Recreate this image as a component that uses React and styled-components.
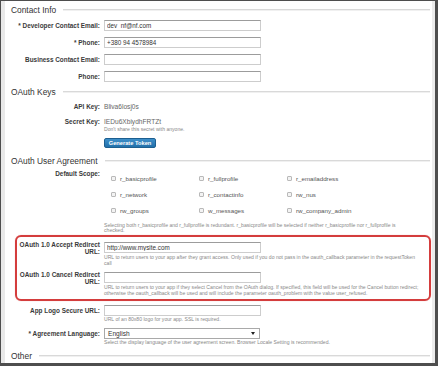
import styled, { createGlobalStyle } from "styled-components";

const GlobalStyle = createGlobalStyle`
  html, body { margin: 0; padding: 0; background: #fff; }
  body { font-family: "Liberation Sans", Arial, sans-serif; }
`;

const Frame = styled.div`
  box-sizing: border-box;
  width: 438px;
  height: 366px;
  border-style: solid;
  border-color: #4e4e4e;
  border-width: 1px 3px 3px 1px;
  background: #fff;
  overflow: hidden;
`;

const Page = styled.div`
  box-sizing: border-box;
  height: 100%;
  border-left: 4px solid #e9e9e9;
  border-right: 3px solid #ececec;
  padding-top: 4px;
  display: flex;
  flex-direction: column;
`;

const Heading = styled.div`
  display: flex;
  align-items: center;
  gap: 7px;
  height: 10px;
  margin-top: ${(p) => p.$top || 0}px;
  padding: 0 2px 0 6px;
  font-size: 8.4px;
  color: #333;

  &::after {
    content: "";
    flex: 1;
    height: 0;
    border-top: 1px solid #d9d9d9;
    border-bottom: 1px solid #f0f0f0;
  }
`;

const Row = styled.div`
  display: grid;
  grid-template-columns: ${(p) => p.$label || 95}px 1fr;
  column-gap: 4px;
  align-items: start;
  margin-top: ${(p) => p.$top || 0}px;
`;

const Label = styled.div`
  text-align: right;
  font-size: 6.4px;
  font-weight: bold;
  color: #3a3a3a;
  line-height: ${(p) => p.$lh || 11}px;
`;

const Cell = styled.div`
  display: flex;
  flex-direction: column;
  align-items: flex-start;
`;

const TextInput = styled.input`
  box-sizing: border-box;
  width: 157px;
  height: 11px;
  margin: ${(p) => p.$top || 0}px 0 0;
  padding: 0 2px;
  border: 1px solid #cdcdcd;
  border-top-color: #9c9c9c;
  border-radius: 0;
  background: #fff;
  font-family: inherit;
  font-size: 6.3px;
  line-height: 9px;
  color: #333;
  outline: none;
`;

const Value = styled.div`
  font-size: 6.6px;
  color: #666;
  line-height: 11px;
`;

const Hint = styled.div`
  margin-top: ${(p) => p.$top || 0}px;
  font-size: 5.1px;
  line-height: ${(p) => p.$lh || 5.7}px;
  color: #888;
  white-space: nowrap;
`;

const Button = styled.button`
  box-sizing: border-box;
  margin-top: 5px;
  width: 52px;
  height: 10px;
  padding: 0;
  border: 1px solid #1d5f90;
  border-radius: 2px;
  background: linear-gradient(#3d8fc9, #2270aa);
  color: #fff;
  font-family: inherit;
  font-size: 5.7px;
  font-weight: bold;
`;

const ScopeGrid = styled.div`
  display: grid;
  grid-template-columns: repeat(3, 88px);
  grid-auto-rows: 8px;
  row-gap: 8px;
  margin-top: 5px;
  padding-left: 7px;
`;

const Scope = styled.label`
  display: flex;
  align-items: center;
  gap: 4px;
  font-size: 6.2px;
  color: #555;
  white-space: nowrap;
`;

const Box = styled.span`
  box-sizing: border-box;
  flex: none;
  width: 5px;
  height: 5px;
  border: 1px solid #b9b9b9;
  border-radius: 1px;
  background: #f3f3f3;
`;

const Highlight = styled.div`
  margin: 1px 1px 0 10px;
  padding: 4px 0 2px;
  border: 2px solid #d43d3d;
  border-radius: 6px;
  box-shadow: 0 0 1px rgba(200, 40, 40, 0.4);
`;

const Select = styled.div`
  box-sizing: border-box;
  display: flex;
  align-items: center;
  justify-content: space-between;
  width: 156px;
  height: 11px;
  padding: 0 4px 0 3px;
  border: 1px solid #a9a9a9;
  font-size: 6.6px;
  color: #333;
  background: #fff;

  &::after {
    content: "";
    border-left: 2px solid transparent;
    border-right: 2px solid transparent;
    border-top: 3px solid #222;
  }
`;

const scopes = [
  "r_basicprofile",
  "r_fullprofile",
  "r_emailaddress",
  "r_network",
  "r_contactinfo",
  "rw_nus",
  "rw_groups",
  "w_messages",
  "rw_company_admin",
];

export default function App() {
  return (
    <>
      <GlobalStyle />
      <Frame>
        <Page>
          <Heading>Contact Info</Heading>

          <Row $top={5}>
            <Label>* Developer Contact Email:</Label>
            <TextInput readOnly defaultValue="dev_nf@nf.com" />
          </Row>
          <Row $top={6}>
            <Label>* Phone:</Label>
            <TextInput readOnly defaultValue="+380 94 4578984" />
          </Row>
          <Row $top={6}>
            <Label>Business Contact Email:</Label>
            <TextInput readOnly />
          </Row>
          <Row $top={6}>
            <Label>Phone:</Label>
            <TextInput readOnly />
          </Row>

          <Heading $top={5}>OAuth Keys</Heading>
          <Row $top={4}>
            <Label>API Key:</Label>
            <Value>Bliva6losj0s</Value>
          </Row>
          <Row $top={4}>
            <Label>Secret Key:</Label>
            <Cell>
              <Value>IEDu6XbiydhFRTZt</Value>
              <Hint>Don't share this secret with anyone.</Hint>
              <Button>Generate Token</Button>
            </Cell>
          </Row>

          <Heading $top={8}>OAuth User Agreement</Heading>
          <Row $top={4}>
            <Label $lh={8}>Default Scope:</Label>
            <Cell>
              <ScopeGrid>
                {scopes.map((s) => (
                  <Scope key={s}>
                    <Box />
                    {s}
                  </Scope>
                ))}
              </ScopeGrid>
              <Hint $top={8}>
                Selecting both r_basicprofile and r_fullprofile is redundant. r_basicprofile will be selected if neither r_basicprofile nor r_fullprofile is
                <br />
                checked.
              </Hint>
            </Cell>
          </Row>

          <Highlight>
            <Row $label={83}>
              <Label $lh={7}>
                OAuth 1.0 Accept Redirect
                <br />
                URL:
              </Label>
              <Cell>
                <TextInput readOnly defaultValue="http://www.mysite.com" $top={1} />
                <Hint $top={1} $lh={6}>
                  URL to return users to your app after they grant access. Only used if you do not pass in the oauth_callback parameter in the requestToken
                  <br />
                  call
                </Hint>
              </Cell>
            </Row>
            <Row $label={83} $top={5}>
              <Label $lh={7}>
                OAuth 1.0 Cancel Redirect
                <br />
                URL:
              </Label>
              <Cell>
                <TextInput readOnly $top={1} />
                <Hint $top={2}>
                  URL to return users to your app if they select Cancel from the OAuth dialog. If specified, this field will be used for the Cancel button redirect;
                  <br />
                  otherwise the oauth_callback will be used and will include the parameter oauth_problem with the value user_refused.
                </Hint>
              </Cell>
            </Row>
          </Highlight>

          <Row $top={4}>
            <Label>App Logo Secure URL:</Label>
            <Cell>
              <TextInput readOnly />
              <Hint $top={1}>URL of an 80x80 logo for your app. SSL is required.</Hint>
            </Cell>
          </Row>
          <Row $top={6}>
            <Label>* Agreement Language:</Label>
            <Cell>
              <Select>English</Select>
              <Hint $top={1}>
                Select the display language of the user agreement screen. Browser Locale Setting is recommended.
              </Hint>
            </Cell>
          </Row>

          <Heading $top={5}>Other</Heading>
        </Page>
      </Frame>
    </>
  );
}
